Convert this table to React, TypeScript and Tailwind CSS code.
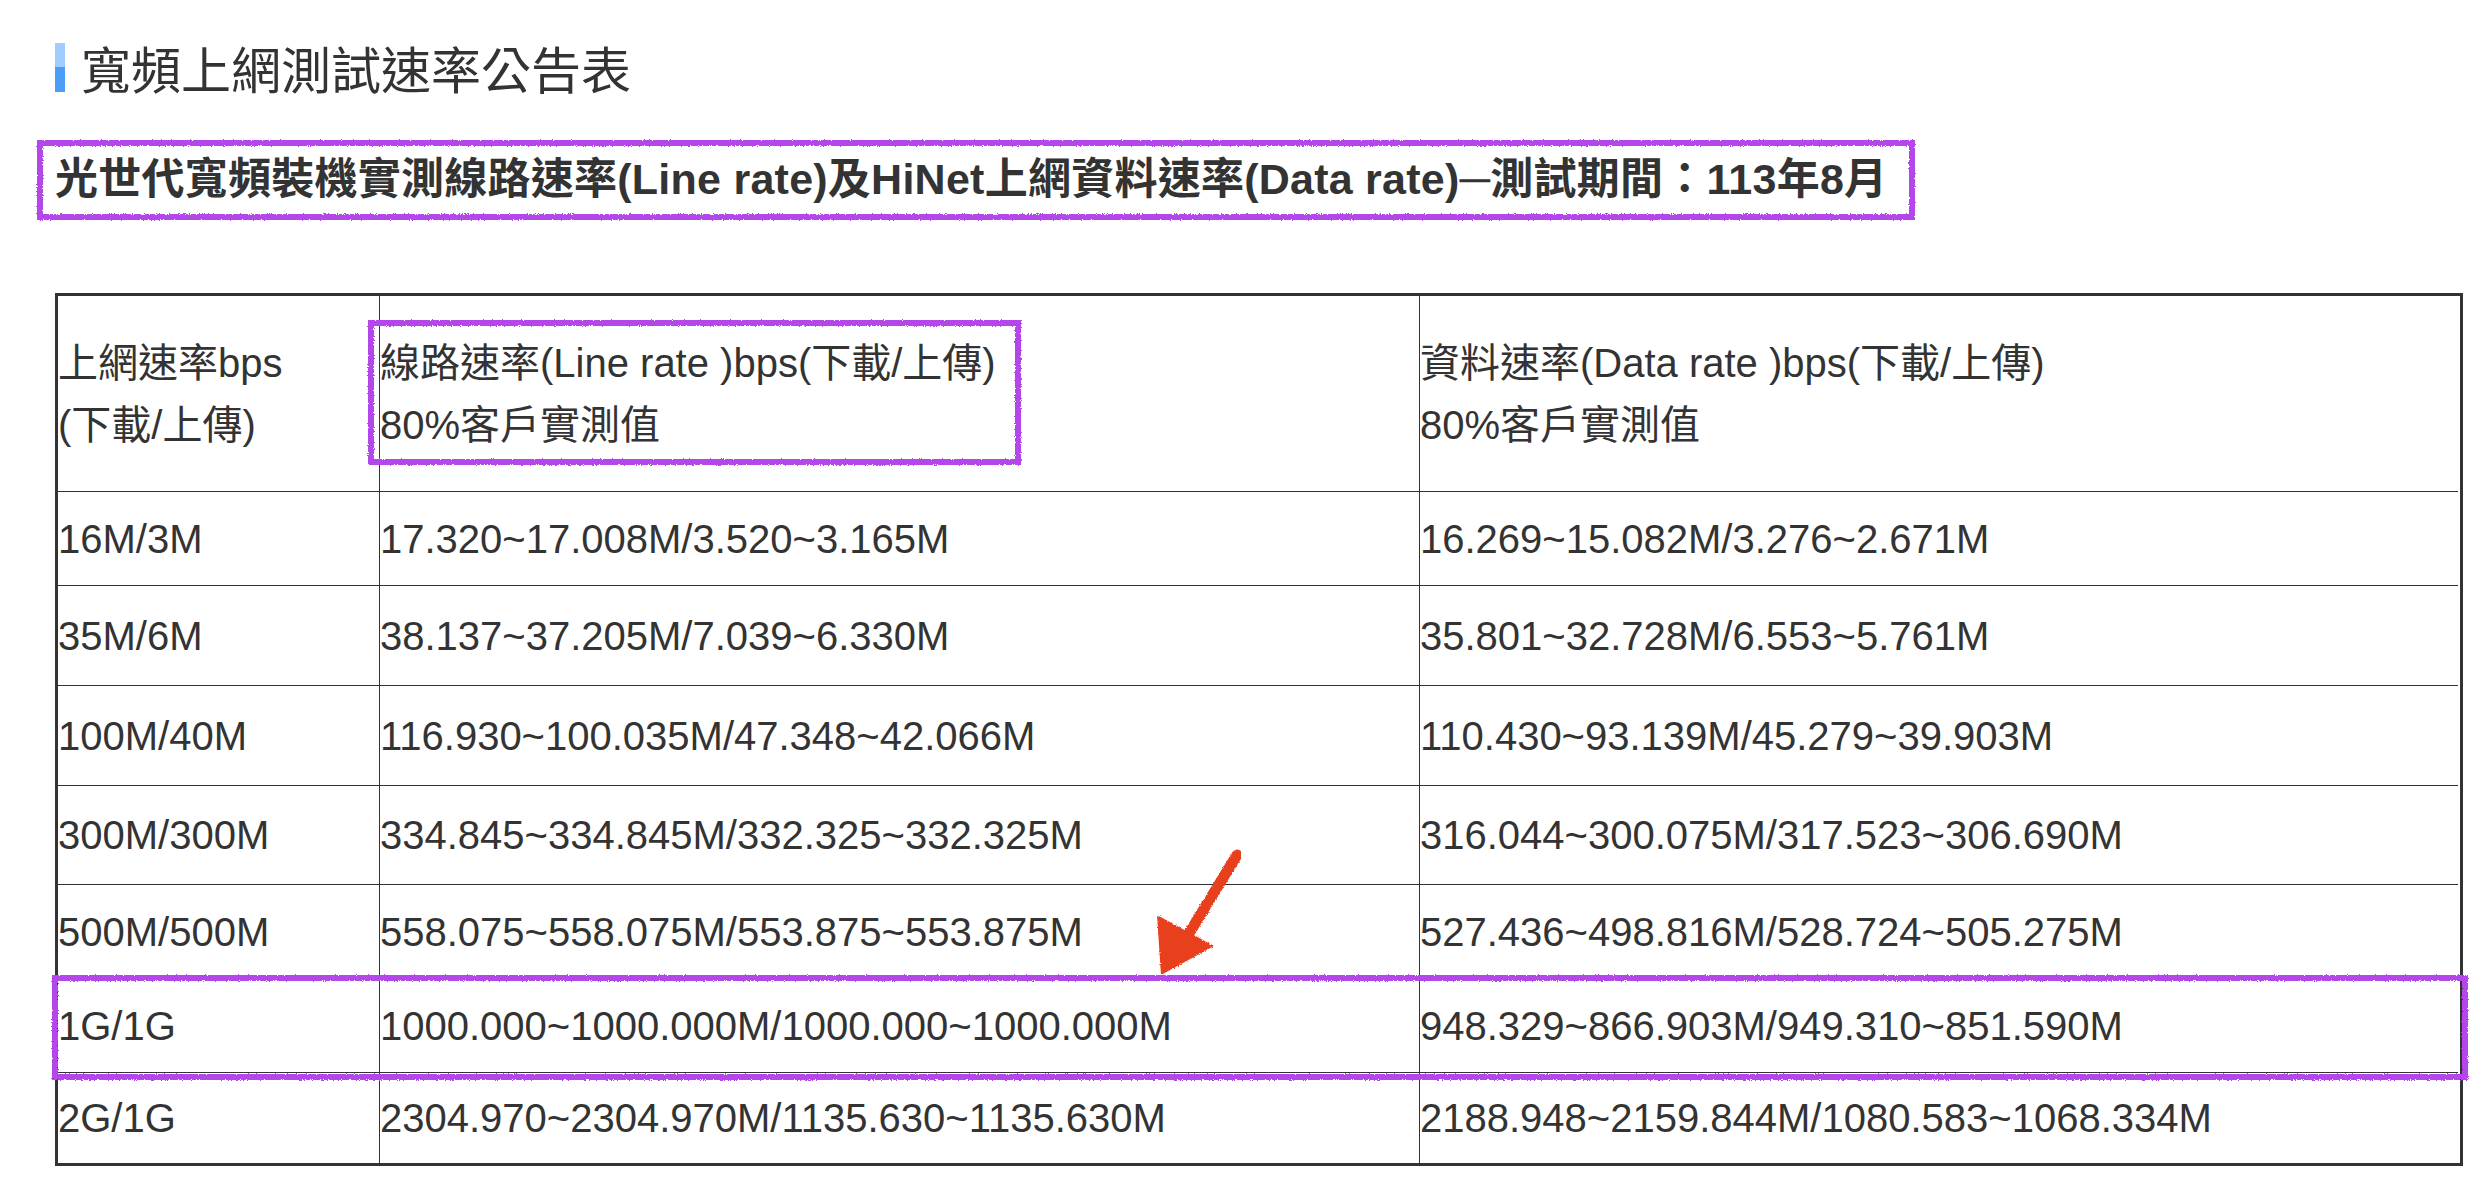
import React from "react";

const rows: [string, string, string, string][] = [
  ["16M/3M", "17.320~17.008M/3.520~3.165M", "16.269~15.082M/3.276~2.671M", "h-[94px]"],
  ["35M/6M", "38.137~37.205M/7.039~6.330M", "35.801~32.728M/6.553~5.761M", "h-[100px]"],
  ["100M/40M", "116.930~100.035M/47.348~42.066M", "110.430~93.139M/45.279~39.903M", "h-[100px]"],
  ["300M/300M", "334.845~334.845M/332.325~332.325M", "316.044~300.075M/317.523~306.690M", "h-[99px]"],
  ["500M/500M", "558.075~558.075M/553.875~553.875M", "527.436~498.816M/528.724~505.275M", "h-[94px]"],
  ["1G/1G", "1000.000~1000.000M/1000.000~1000.000M", "948.329~866.903M/949.310~851.590M", "h-[94px]"],
  ["2G/1G", "2304.970~2304.970M/1135.630~1135.630M", "2188.948~2159.844M/1080.583~1068.334M", "h-[91px]"],
];

export default function App() {
  return (
    <div className="relative w-[2482px] h-[1190px] overflow-hidden bg-white text-[#333] [font-family:'Liberation_Sans','Noto_Sans_CJK_TC',sans-serif]">
      <svg className="absolute w-0 h-0" aria-hidden="true">
        <defs>
          <filter id="rough" x="-5%" y="-5%" width="110%" height="110%">
            <feTurbulence type="fractalNoise" baseFrequency="0.9" numOctaves="2" seed="3" result="n" />
            <feDisplacementMap in="SourceGraphic" in2="n" scale="3" xChannelSelector="R" yChannelSelector="G" />
          </filter>
        </defs>
      </svg>

      <div className="pl-[55px] pt-[43px]">
        <div className="flex items-center h-[49px]">
          <div className="flex flex-col w-[10px] h-[49px]">
            <div className="h-[24px] bg-[#9fcdff]" />
            <div className="h-[25px] bg-[#4b9ef6]" />
          </div>
          <h1 className="ml-[16px] text-[50px] leading-[49px] font-normal [font-family:'Noto_Sans_CJK_TC',sans-serif]">
            寬頻上網測試速率公告表
          </h1>
        </div>

        <p className="mt-[57px] text-[43px] tracking-[0.25px] leading-[60px] font-bold whitespace-nowrap">
          光世代寬頻裝機實測線路速率(Line rate)及HiNet上網資料速率(Data rate)─測試期間：113年8月
        </p>

        <div className="mt-[84px] w-[2408px] grid grid-cols-[321px_1040px_1039px] border-[3px] border-[#333] text-[40px]">
          <div className="h-[195px] flex flex-col justify-center leading-[62px]">
            <span>上網速率bps</span>
            <span>(下載/上傳)</span>
          </div>
          <div className="h-[195px] flex flex-col justify-center leading-[62px] border-l border-[#333]">
            <span>線路速率(Line rate )bps(下載/上傳)</span>
            <span>80%客戶實測值</span>
          </div>
          <div className="h-[195px] flex flex-col justify-center leading-[62px] border-l border-[#333]">
            <span>資料速率(Data rate )bps(下載/上傳)</span>
            <span>80%客戶實測值</span>
          </div>
          {rows.map((r) => (
            <React.Fragment key={r[0]}>
              <div className={`${r[3]} flex items-center border-t border-[#333] whitespace-nowrap`}>{r[0]}</div>
              <div className={`${r[3]} flex items-center border-t border-l border-[#333] whitespace-nowrap`}>{r[1]}</div>
              <div className={`${r[3]} flex items-center border-t border-l border-[#333] whitespace-nowrap`}>{r[2]}</div>
            </React.Fragment>
          ))}
        </div>
      </div>

      {/* annotations */}
      <div className="absolute left-[37px] top-[140px] w-[1878px] h-[80px] border-[6px] border-[#b447ea] [filter:url(#rough)] pointer-events-none" />
      <div className="absolute left-[368px] top-[320px] w-[653px] h-[145px] border-[6px] border-[#b447ea] [filter:url(#rough)] pointer-events-none" />
      <div className="absolute left-[52px] top-[975px] w-[2416px] h-[105px] border-[6px] border-[#b447ea] [filter:url(#rough)] pointer-events-none" />

      <svg className="absolute left-[1140px] top-[840px] w-[110px] h-[150px] pointer-events-none" viewBox="1140 840 110 150">
        <g filter="url(#rough)">
          <path d="M1237 855 L1188 935" stroke="#e8401f" strokeWidth="11" strokeLinecap="round" fill="none" />
          <polygon points="1157,915 1214,946 1161,975" fill="#e8401f" />
        </g>
      </svg>
    </div>
  );
}
